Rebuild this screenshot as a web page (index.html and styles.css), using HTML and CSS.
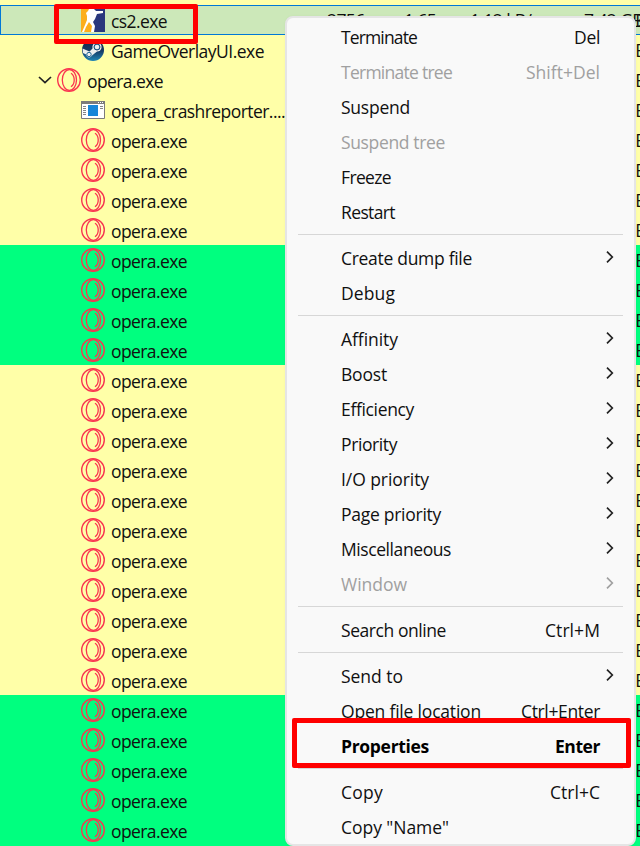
FILE: index.html
```html
<!DOCTYPE html>
<html lang="en">
<head>
<meta charset="utf-8">
<title>Processes</title>
<link rel="stylesheet" href="styles.css">
</head>
<body>
<svg class="defs" aria-hidden="true">
  <symbol id="opera" viewBox="0 0 24 24"><g fill="none" stroke="#fa3450"><circle cx="12" cy="12" r="11.3" stroke-width="1.4"/><ellipse cx="12.4" cy="12" rx="7.1" ry="10.4" stroke-width="1.3"/><path d="M14 5.3C18.3 8 18.3 16 14 18.7" stroke-width="1.3"/></g></symbol>
  <symbol id="steam" viewBox="0 0 24 24"><circle cx="12" cy="12" r="11" fill="url(#steamfill)"/><path d="M1.5 10.5 8.5 13.5 13 9 16 13.5 11 17.5C9 21 5 19 5.2 16.5L2 15Z" fill="#eee"/><circle cx="16" cy="9" r="4.6" fill="#eee"/><circle cx="16" cy="9" r="3" fill="#204e7c" stroke="#204e7c"/><circle cx="16" cy="9" r="2.3" fill="#eee"/><circle cx="8" cy="16.5" r="2.2" fill="none" stroke="#236694"/></symbol>
  <symbol id="app" viewBox="0 0 24 18"><path d="M.5.5h23v17H.5z" fill="#fff" stroke="#7b7b7b"/><path d="M0 0h24v3H0z" fill="#7b7b7b"/><path d="M17 1.5h1m1 0h1m1 0h1" stroke="#fff"/><path d="M7 4h10v11H7z" fill="#1686d8"/><path d="M2 5.5h3m-3 2h3m-3 2h3m-3 2h3m-3 2h3M19 5.5h3m-3 2h3" stroke="#858585"/></symbol>
  <symbol id="right" viewBox="0 0 8 14"><path d="m1 1.7 5.3 5.3L1 12.3" fill="none" stroke="currentColor" stroke-width="1.7"/></symbol>
  <linearGradient id="steamfill" x2="0" y2="1"><stop stop-color="#142047"/><stop offset=".55" stop-color="#173c67"/><stop offset="1" stop-color="#2086b5"/></linearGradient>
</svg>
<main class="window">
  <div class="tree" id="tree">
    <div class="row previous"><svg class="icon"><use href="#steam"/></svg></div>
    <div class="row selected">
      <svg class="icon" viewBox="0 0 24 24"><path d="M0 0h24v24H0z" fill="#fcae1b"/><path d="M13 0h11v24H11z" fill="#29377d"/><path d="M8 1h5l2 2h7v2l-6 1-2 5-2 3 2 4-1 6h-3l1-6-3-4-3 5-2 5H1l3-7 2-5V8L5 5l2-2z" fill="#fff"/></svg>
      <span class="name">cs2.exe</span>
      <span class="metrics"><span>2756</span><span>1.65</span><span>1.12 kB/s</span><span>7.42 GB</span></span>
      <span class="user">E</span>
    </div>
    <div class="row"><svg class="icon"><use href="#steam"/></svg><span class="name" data-width="153">GameOverlayUI.exe</span><span class="user">E</span></div>
    <div class="row parent"><svg class="expand" viewBox="0 0 14 8"><path d="m1 1 6 5.7L13 1" fill="none" stroke="#222" stroke-width="1.7"/></svg><svg class="icon"><use href="#opera"/></svg><span class="name" data-width="76">opera.exe</span><span class="user">E</span></div>
    <div class="row"><svg class="icon app"><use href="#app"/></svg><span class="name" data-width="174">opera_crashreporter....</span><span class="user">E</span></div>
  </div>
  <div class="menu">
    <div class="item"><span data-width="76">Terminate</span><kbd data-width="26">Del</kbd></div>
    <div class="item disabled"><span data-width="111">Terminate tree</span><kbd data-width="74">Shift+Del</kbd></div>
    <div class="item"><span data-width="69">Suspend</span></div>
    <div class="item disabled"><span data-width="104">Suspend tree</span></div>
    <div class="item"><span data-width="50">Freeze</span></div>
    <div class="item"><span data-width="54">Restart</span></div>
    <hr>
    <div class="item"><span data-width="131">Create dump file</span><svg class="arrow"><use href="#right"/></svg></div>
    <div class="item"><span data-width="54">Debug</span></div>
    <hr>
    <div class="item"><span data-width="57">Affinity</span><svg class="arrow"><use href="#right"/></svg></div>
    <div class="item"><span data-width="46">Boost</span><svg class="arrow"><use href="#right"/></svg></div>
    <div class="item"><span data-width="73">Efficiency</span><svg class="arrow"><use href="#right"/></svg></div>
    <div class="item"><span data-width="56">Priority</span><svg class="arrow"><use href="#right"/></svg></div>
    <div class="item"><span data-width="88">I/O priority</span><svg class="arrow"><use href="#right"/></svg></div>
    <div class="item"><span data-width="100">Page priority</span><svg class="arrow"><use href="#right"/></svg></div>
    <div class="item"><span data-width="110">Miscellaneous</span><svg class="arrow"><use href="#right"/></svg></div>
    <div class="item disabled"><span data-width="66">Window</span><svg class="arrow"><use href="#right"/></svg></div>
    <hr>
    <div class="item"><span data-width="105">Search online</span><kbd data-width="55">Ctrl+M</kbd></div>
    <hr>
    <div class="item"><span data-width="62">Send to</span><svg class="arrow"><use href="#right"/></svg></div>
    <div class="item"><span data-width="140">Open file location</span><kbd data-width="79">Ctrl+Enter</kbd></div>
    <div class="item default"><span data-width="88">Properties</span><kbd data-width="45">Enter</kbd></div>
    <hr>
    <div class="item"><span data-width="42">Copy</span><kbd data-width="50">Ctrl+C</kbd></div>
    <div class="item"><span data-width="108">Copy "Name"</span></div>
  </div>
  <div class="mark mark-process"></div>
  <div class="mark mark-properties"></div>
</main>
<script src="script.js"></script>
</body>
</html>
```
FILE: styles.css
```css
* { box-sizing: border-box; }
body { margin: 0; }
.defs { position: absolute; width: 0; height: 0; }
.window {
  position: relative;
  width: 640px;
  height: 846px;
  overflow: hidden;
  background: #ffffa8;
  color: #101010;
  font: 17.5px/30px "Open Sans", "Noto Sans", sans-serif;
  letter-spacing: -0.6px;
}
.row {
  display: flex;
  align-items: center;
  height: 30px;
  padding-left: 81px;
  white-space: nowrap;
  background: #ffffa8;
}
.previous { height: 5px; align-items: flex-end; overflow: hidden; padding-left: 105px; }
.previous .icon { margin-bottom: 4px; }
.selected { background: #cce8b9; border: 1px solid #0078d7; border-right: 0; padding-left: 80px; }
.parent { padding-left: 38px; }
.green { background: #00ff7f; }
.icon { width: 24px; height: 24px; flex: none; }
.icon.app { height: 18px; }
.expand { width: 14px; height: 8px; margin-right: 5px; }
.name { margin-left: 6px; padding-top: 1px; }
.user { margin-left: auto; margin-right: -5px; letter-spacing: 0; }
.metrics {
  display: grid;
  grid-template-columns: 77px 66px 114px 60px;
  position: absolute;
  left: 327px;
  top: 5px;
}
.menu {
  position: absolute;
  left: 285px;
  top: 16px;
  width: 351px;
  height: 830px;
  padding: 1px 11px 0;
  background: #f9f9f9;
  border: 2px solid #e5e5e5;
  border-radius: 8px;
  box-shadow: 0 0 3px #0000000a;
}
.item {
  display: flex;
  align-items: center;
  height: 35px;
  padding: 1px 23px 0 43px;
  white-space: nowrap;
}
.item kbd { margin-left: auto; font: inherit; }
.arrow { width: 8px; height: 14px; margin: -3px -14px 0 auto; color: #222; }
.disabled, .disabled .arrow { color: #a0a0a0; }
.default { font-weight: 700; color: #000; }
hr { height: 1px; margin: 5px 0; border: 0; background: #d7d7d7; }
.mark { position: absolute; border: 5px solid #f00; border-radius: 2px; }
.mark-process { left: 54px; top: 4px; width: 144px; height: 40px; }
.mark-properties { left: 292px; top: 718px; width: 339px; height: 50px; }
```
FILE: script.js
```js
const tree = document.getElementById("tree");
for (let i = 0; i < 25; i += 1) {
  const row = document.createElement("div");
  const green = (i >= 4 && i < 8) || i >= 19;
  row.className = green ? "row green" : "row";
  row.innerHTML = '<svg class="icon"><use href="#opera"/></svg><span class="name" data-width="76">opera.exe</span><span class="user">E</span>';
  tree.append(row);
}

// Track each label so that its columns keep a fixed width.
for (const label of document.querySelectorAll("[data-width]")) {
  label.style.letterSpacing = "0px";
  const natural = label.getBoundingClientRect().width;
  const spacing = (Number(label.dataset.width) - natural) / label.textContent.length;
  label.style.letterSpacing = `${spacing}px`;
}
```
